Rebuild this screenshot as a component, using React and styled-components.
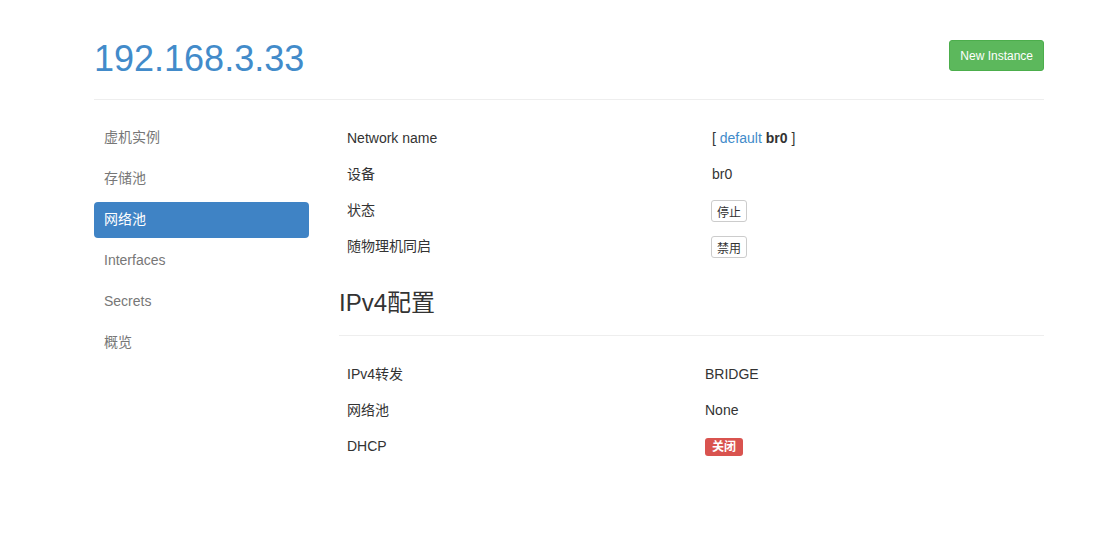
import React from "react";
import styled, { createGlobalStyle } from "styled-components";

const GlobalStyle = createGlobalStyle`
  html, body {
    margin: 0;
    padding: 0;
    background: #fff;
  }
  body {
    font-family: "Liberation Sans", Arial, "Noto Sans CJK SC", sans-serif;
    font-size: 14px;
    line-height: 1.42857;
    color: #333;
  }
`;

const Page = styled.div`
  width: 950px;
  margin-left: 94px;
`;

const Header = styled.div`
  display: flex;
  align-items: flex-start;
  justify-content: space-between;
  height: 100px;
  border-bottom: 1px solid #eee;
  box-sizing: border-box;
  padding-top: 39px;
`;

const Title = styled.h1`
  margin: 0;
  font-size: 36px;
  font-weight: 400;
  line-height: 40px;
  color: #428bca;
`;

const SuccessButton = styled.button`
  height: 31px;
  padding: 0 10px;
  margin-top: 1px;
  font-family: inherit;
  font-size: 12px;
  font-weight: 400;
  color: #fff;
  background: #5cb85c;
  border: 1px solid #4cae4c;
  border-radius: 3px;
`;

const Body = styled.div`
  display: grid;
  grid-template-columns: 215px 1fr;
  column-gap: 30px;
  padding-top: 20px;
`;

const Nav = styled.ul`
  list-style: none;
  margin: 0;
  padding: 0;
  display: flex;
  flex-direction: column;
  gap: 5px;
`;

const NavItem = styled.li`
  height: 36px;
  display: flex;
  align-items: center;
  padding: 0 10px;
  border-radius: 4px;
  color: ${(p) => (p.$active ? "#fff" : "#777")};
  background: ${(p) => (p.$active ? "#3f83c5" : "transparent")};
`;

const Main = styled.div`
  display: flex;
  flex-direction: column;
  padding-top: 1px;
`;

const Table = styled.div`
  display: grid;
  grid-template-columns: ${(p) => p.$label}px 1fr;
  grid-auto-rows: 36px;
`;

const Cell = styled.div`
  display: flex;
  align-items: center;
  padding: 0 8px;
`;

const Link = styled.a`
  color: #428bca;
  text-decoration: none;
`;

const SmallButton = styled.button`
  height: 22px;
  padding: 0 5px;
  font-family: inherit;
  font-size: 12px;
  color: #333;
  background: #fff;
  border: 1px solid #ccc;
  border-radius: 3px;
  margin-left: -1px;
`;

const Section = styled.h3`
  margin: 0;
  padding-top: 25px;
  padding-bottom: 19px;
  font-size: 24px;
  font-weight: 400;
  line-height: 26px;
  border-bottom: 1px solid #eee;
  margin-bottom: 21px;
`;

const Badge = styled.span`
  display: inline-block;
  padding: 3px 7px 2px;
  font-size: 12px;
  font-weight: 700;
  line-height: 13px;
  color: #fff;
  background: #d9534f;
  border-radius: 3px;
`;

const navItems = ["虚机实例", "存储池", "网络池", "Interfaces", "Secrets", "概览"];

export default function App() {
  return (
    <>
      <GlobalStyle />
      <Page>
        <Header>
          <Title>192.168.3.33</Title>
          <SuccessButton>New Instance</SuccessButton>
        </Header>
        <Body>
          <Nav>
            {navItems.map((n) => (
              <NavItem key={n} $active={n === "网络池"}>
                {n}
              </NavItem>
            ))}
          </Nav>
          <Main>
            <Table $label={365}>
              <Cell>Network name</Cell>
              <Cell>
                [&nbsp;<Link>default</Link>&nbsp;<b>br0</b>&nbsp;]
              </Cell>
              <Cell>设备</Cell>
              <Cell>br0</Cell>
              <Cell>状态</Cell>
              <Cell>
                <SmallButton>停止</SmallButton>
              </Cell>
              <Cell>随物理机同启</Cell>
              <Cell>
                <SmallButton>禁用</SmallButton>
              </Cell>
            </Table>
            <Section>IPv4配置</Section>
            <Table $label={358}>
              <Cell>IPv4转发</Cell>
              <Cell>BRIDGE</Cell>
              <Cell>网络池</Cell>
              <Cell>None</Cell>
              <Cell>DHCP</Cell>
              <Cell>
                <Badge>关闭</Badge>
              </Cell>
            </Table>
          </Main>
        </Body>
      </Page>
    </>
  );
}
